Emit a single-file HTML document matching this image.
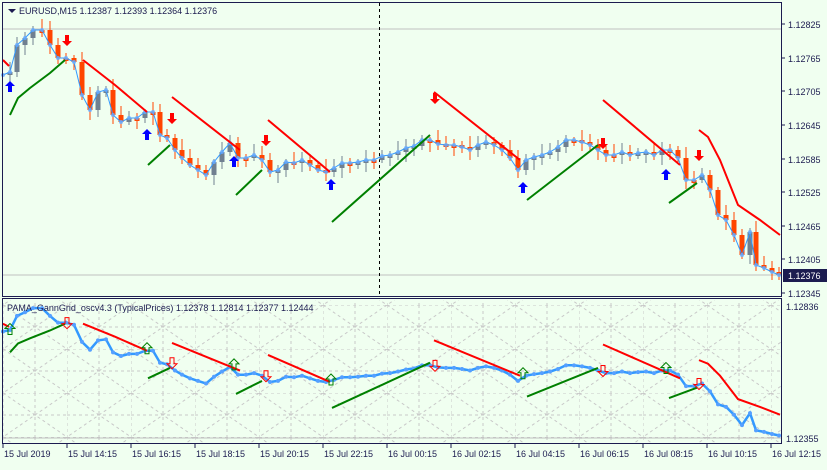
<!DOCTYPE html>
<html><head><meta charset="utf-8"><style>
html,body{margin:0;padding:0;background:#f0fff0;}
body{width:827px;height:465px;overflow:hidden;font-family:"Liberation Sans",sans-serif;}
svg text{font-family:"Liberation Sans",sans-serif;font-size:9px;fill:#1c1c50;}
</style></head><body>
<svg id="s" width="827" height="465" xmlns="http://www.w3.org/2000/svg">
<defs>
<pattern id="g" x="3" y="305" width="64" height="44" patternUnits="userSpaceOnUse">
<path d="M0 0V44M32 0V44M0 0H64M0 22H64M0 0L64 44M64 0L0 44" stroke="#c8c8c8" stroke-width="1" stroke-dasharray="3,3" fill="none"/>
</pattern>
</defs>
<rect width="827" height="465" fill="#f0fff0"/>
<rect x="3" y="300" width="778" height="143" fill="url(#g)"/>
<line x1="3" y1="29" x2="781" y2="29" stroke="#c0c0c0"/>
<line x1="3" y1="275" x2="781" y2="275" stroke="#c0c0c0"/>
<line x1="3" y1="438" x2="781" y2="438" stroke="#c0c0c0"/>
<line x1="379.5" y1="3" x2="379.5" y2="296" stroke="#000" stroke-dasharray="3,3"/>
<g id="main"></g>
<g id="sub"></g>
<rect x="2.5" y="2.5" width="779" height="294" fill="none" stroke="#1c1c50"/>
<rect x="2.5" y="298.5" width="779" height="145" fill="none" stroke="#1c1c50"/>
<path d="M8 9l4 4 4-4z" fill="#1c1c50"/>
<text x="19" y="14">EURUSD,M15  1.12387 1.12393 1.12364 1.12376</text>
<text x="7" y="311">PAMA_GannGrid_oscv4.3  (TypicalPrices)  1.12378 1.12814 1.12377 1.12444</text>
<g id="ax"></g>
</svg>
<script>
(function(){
var NS="http://www.w3.org/2000/svg";
function el(p,t,a){var e=document.createElementNS(NS,t);for(var k in a)e.setAttribute(k,a[k]);p.appendChild(e);return e;}
var M=document.getElementById('main'),S=document.getElementById('sub'),A=document.getElementById('ax');
var pts=[[3,75],[10,72],[17,45],[25,38],[33,30],[42,30],[50,45],[58,58],[66,58],[74,62],[82,95],[90,110],[98,92],[106,90],[113,115],[121,122],[129,118],[137,118],[145,112],[153,112],[160,135],[167,138],[175,150],[182,158],[190,165],[198,170],[206,175],[214,162],[222,152],[230,143],[238,158],[246,158],[254,155],[262,160],[270,172],[278,170],[286,162],[294,163],[302,160],[310,165],[318,170],[326,172],[334,168],[342,163],[350,163],[358,162],[366,160],[374,160],[382,156],[390,155],[398,152],[406,148],[414,146],[422,140],[430,140],[438,144],[446,145],[454,145],[462,147],[470,150],[478,145],[486,142],[494,145],[502,150],[510,158],[518,170],[526,160],[534,157],[542,155],[550,152],[558,147],[566,140],[574,140],[582,142],[590,145],[598,150],[606,155],[614,155],[622,152],[630,155],[638,153],[646,152],[654,155],[662,150],[670,150],[678,158],[686,180],[694,180],[702,175],[710,190],[718,215],[726,220],[734,235],[742,255],[750,232],[756,265],[764,268],[772,272],[779,275]];
for(var i=1;i<pts.length;i++){var o=pts[i-1][1],c=pts[i][1],x=pts[i][0];
 var up=c<o;var tp=Math.min(o,c),bt=Math.max(o,c);if(bt-tp<3){bt=tp+3;}
 var hi=tp-3-(i*7%9),lo=bt+3+(i*5%8);
 el(M,'line',{x1:x,y1:hi,x2:x,y2:lo,stroke:up?'#708090':'#ff4500'});
 el(M,'rect',{x:x-2.5,y:tp,width:5,height:bt-tp,fill:up?'#708090':'#ff4500'});}
var d=pts.map(function(p,i){return (i?'L':'M')+p[0]+' '+p[1];}).join('');
el(M,'path',{d:d,stroke:'#3399ff',fill:'none','stroke-width':1});
pts.forEach(function(p){el(M,'circle',{cx:p[0],cy:p[1],r:2,fill:'#66aaff',opacity:.8});});
var reds=[[[3,60],[9,66]],[[83,60],[115,85],[147,112]],[[172,97],[240,150]],[[268,120],[330,172]],[[434,92],[520,160]],[[603,100],[680,165]],[[699,130],[708,137],[720,160],[738,205],[760,220],[780,235]]];
var greens=[[[10,115],[18,98],[30,88],[50,73],[65,60]],[[148,165],[170,145]],[[236,195],[262,170]],[[332,222],[430,135]],[[527,200],[598,145]],[[669,203],[697,183]]];
function pl(g,arr,col,f){arr.forEach(function(s){el(g,'path',{d:s.map(function(p,i){return (i?'L':'M')+p[0]+' '+f(p[1]);}).join(''),stroke:col,'stroke-width':2,fill:'none'});});}
var id=function(y){return y;},sy=function(y){return 305+(y-24)*0.52;};
pl(M,reds,'#ff0000',id);pl(M,greens,'#008000',id);
[[10,87],[147,135],[234,162],[331,185],[523,188],[666,175]].forEach(function(p){el(M,'path',{d:'M'+p[0]+' '+(p[1]-6)+'l-5 5h3v6h4v-6h3z',fill:'#0000ff'});});
[[67,40],[172,118],[266,140],[435,98],[603,143],[699,155]].forEach(function(p){el(M,'path',{d:'M'+p[0]+' '+(p[1]+6)+'l-5 -5h3v-6h4v6h3z',fill:'#ff0000'});});
var sd=pts.map(function(p,i){return (i?'L':'M')+p[0]+' '+sy(p[1]).toFixed(1);}).join('');
el(S,'path',{d:sd,stroke:'#3399ff',fill:'none','stroke-width':2.5});
pts.forEach(function(p){el(S,'circle',{cx:p[0],cy:sy(p[1]),r:2,fill:'#55a0ff'});});
pl(S,reds,'#ff0000',sy);pl(S,greens,'#008000',sy);
[[10,75],[147,112],[234,143],[331,172],[523,160],[666,150]].forEach(function(p){var y=sy(p[1]);el(S,'path',{d:'M'+p[0]+' '+(y-8)+'l-5 5h3v6h4v-6h3z',fill:'none',stroke:'#008000'});});
[[67,58],[172,135],[266,160],[435,140],[603,150],[699,175]].forEach(function(p){var y=sy(p[1]);el(S,'path',{d:'M'+p[0]+' '+(y+6)+'l-5 -5h3v-6h4v6h3z',fill:'none',stroke:'#ff0000'});});
var pr=[['1.12825',24],['1.12765',58],['1.12705',91],['1.12645',125],['1.12585',159],['1.12525',192],['1.12465',226],['1.12405',259],['1.12345',293]];
pr.forEach(function(p){el(A,'line',{x1:782,y1:p[1],x2:785,y2:p[1],stroke:'#1c1c50'});var t=el(A,'text',{x:788,y:p[1]+4});t.textContent=p[0];});
el(A,'rect',{x:783,y:269,width:44,height:13,fill:'#1c1c50'});
var t=el(A,'text',{x:788,y:279,style:'fill:#fff'});t.textContent='1.12376';
[['1.12836',306],['1.12355',438]].forEach(function(p){var t=el(A,'text',{x:786,y:p[1]+4});t.textContent=p[0];});
var tl=['15 Jul 2019','15 Jul 14:15','15 Jul 16:15','15 Jul 18:15','15 Jul 20:15','15 Jul 22:15','16 Jul 00:15','16 Jul 02:15','16 Jul 04:15','16 Jul 06:15','16 Jul 08:15','16 Jul 10:15','16 Jul 12:15'];
tl.forEach(function(s,i){var x=3+i*64;el(A,'line',{x1:x,y1:444,x2:x,y2:448,stroke:'#1c1c50'});var t=el(A,'text',{x:x+1,y:457});t.textContent=s;});
})();
</script>
</body></html>
